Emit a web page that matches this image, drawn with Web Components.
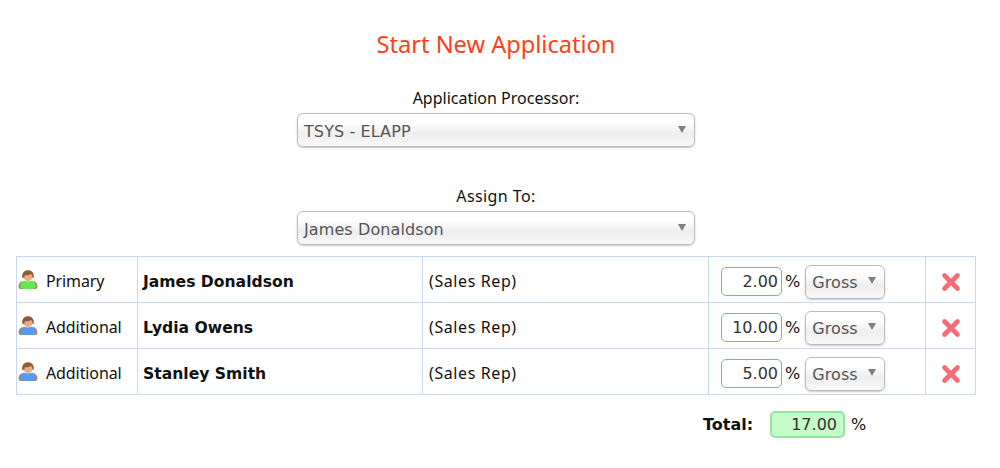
<!DOCTYPE html>
<html>
<head>
<meta charset="utf-8">
<title>Start New Application</title>
<style>
  html, body { margin: 0; background: #fff; }
  body { font-family: "Noto Sans", "DejaVu Sans", sans-serif; font-size: 16px; color: #111; }
</style>
</head>
<body>
<start-application></start-application>

<template id="person-icon-tpl">
  <style>
    :host { display: inline-block; width: 20px; height: 20px; flex: none; }
    svg { display: block; }
  </style>
  <svg width="20" height="20" viewBox="0 0 20 20">
    <path d="M.6 15.500c.3-2 1.600-3.700 3.400-4.500l1.300 8H2.500C1 19 .3 17 .6 15.500zM19.400 15.500c-.3-2-1.600-3.700-3.400-4.500l-1.300 8h2.800c1.500 0 2.200-2 1.900-3.500z" fill="#b08a55"/>
    <path id="shirt" d="M2.300 15.500c0-2.500 1.800-4.400 4-5 1.600 1.200 5.800 1.200 7.400 0 2.200.6 4 2.500 4 5 0 2-1.500 3.500-3.200 3.500H5.500c-1.700 0-3.200-1.500-3.200-3.500z"/>
    <path d="M5 5.500C5 2.500 7 .6 10 .6s5 1.900 5 4.900c0 2.800-2.300 5.500-5 5.500S5 8.300 5 5.500z" fill="#e8ad85"/>
    <path d="M4.300 8C3.500 3.200 6.300.2 10 .2s6.500 3 5.700 7.800l-1.300-.6c.1-1.500-.4-2.700-1.500-3.400-1.500 1.300-4.200 1.500-6 1.200-.4.800-.4 1.500-.4 2.200z" fill="#8f5a38"/>
  </svg>
</template>

<template id="drop-select-tpl">
  <style>
    :host { display: block; box-sizing: border-box; height: 34px; }
    .box {
      box-sizing: border-box; height: 100%;
      display: flex; align-items: center; justify-content: space-between;
      border: 1px solid #bdbdbd; border-radius: 6px;
      background: linear-gradient(#fff 0%, #fff 25%, #eeeeee 60%, #f8f8f8 100%);
      box-shadow: 0 1px 2px rgba(0,0,0,.22);
      padding: 0 8px 0 6px;
      font-family: "DejaVu Sans", sans-serif; font-size: 16px; letter-spacing: .1px; color: #555;
    }
    .box span { padding-top: 2px; }
    .arrow { width: 0; height: 0; border-left: 4px solid transparent; border-right: 4px solid transparent; border-top: 7px solid #808080; margin-top: -2px; }
  </style>
  <div class="box"><span><slot></slot></span><i class="arrow"></i></div>
</template>

<template id="num-box-tpl">
  <style>
    :host { display: block; box-sizing: border-box; width: 61px; height: 29px; }
    .box {
      box-sizing: border-box; height: 100%;
      display: flex; align-items: center; justify-content: flex-end;
      border: 1px solid #78aedb; border-radius: 5px; padding-right: 3px;
      font-family: "DejaVu Sans", sans-serif; font-size: 16px; color: #333; background: #fff;
    }
    :host([ok]) { width: 75px; height: 27px; }
    :host([ok]) .box { border: 2px solid #93e69b; background: #c6fcca; padding-right: 6px; }
  </style>
  <div class="box"><slot></slot></div>
</template>

<template id="assign-row-tpl">
  <style>
    :host {
      display: grid; grid-template-columns: 121px 285px 286px 217px 50px;
      box-sizing: border-box; height: 46px; font-size: 16px; color: #111;
      border-bottom: 1px solid #c8daef;
    }
    .cell { display: flex; align-items: center; box-sizing: border-box; border-right: 1px solid #c8daef; padding: 4px 0 0 5px; min-width: 0; white-space: nowrap; }
    .cell:last-child { border-right: 0; justify-content: center; padding-left: 0; }
    .role { padding: 0 0 0 1px; gap: 8px; }
    .role span { letter-spacing: -.1px; padding-top: 2px; }
    .name { font-family: "DejaVu Sans", sans-serif; font-weight: 700; font-size: 15.600px; }
    .cell.rep { letter-spacing: .6px; padding: 2px 0 0 6px; }
    .pay { padding-left: 12px; }
    .pct { margin: 0 5px 0 3px; font-family: "DejaVu Sans", sans-serif; }
    drop-select { width: 80px; }
    svg { display: block; }
  </style>
  <div class="cell role"><person-icon></person-icon><span id="role"></span></div>
  <div class="cell name"><span id="name"></span></div>
  <div class="cell rep">(Sales Rep)</div>
  <div class="cell pay"><num-box id="val"></num-box><span class="pct">%</span><drop-select>Gross</drop-select></div>
  <div class="cell">
    <svg width="20" height="20" viewBox="0 0 20 20"><path d="M3.500 3.500l13 13M16.500 3.500l-13 13" stroke="#f86a74" stroke-width="4.600" stroke-linecap="round"/></svg>
  </div>
</template>

<template id="start-application-tpl">
  <style>
    :host { display: block; box-sizing: border-box; width: 1000px; height: 468px; padding: 0 24px 0 16px; text-align: center; }
    h1 { margin: 0; padding-top: 27px; height: 85px; box-sizing: border-box; font-weight: 400; font-size: 23.600px; line-height: 34px; color: #ff4118; }
    label { display: block; height: 28px; line-height: 26px; font-size: 16px; }
    label.wide { letter-spacing: .4px; }
    .field { display: flex; flex-direction: column; align-items: center; margin-bottom: 36px; }
    .field.end { margin-bottom: 11px; }
    drop-select { width: 398px; text-align: left; }
    .table { border: 1px solid #c8daef; border-bottom: 0; width: 960px; box-sizing: border-box; text-align: left; }
    .total { display: flex; align-items: center; height: 27px; margin-top: 16px; padding-left: 687px; text-align: left; }
    .total b { width: 67px; font-family: "DejaVu Sans", sans-serif; font-size: 16px; }
    .total span { margin-left: 6px; font-family: "DejaVu Sans", sans-serif; }
  </style>
  <h1>Start New Application</h1>
  <div class="field"><label>Application Processor:</label><drop-select>TSYS - ELAPP</drop-select></div>
  <div class="field end"><label class="wide">Assign To:</label><drop-select>James Donaldson</drop-select></div>
  <div class="table">
    <assign-row role="Primary" name="James Donaldson" value="2.00" color="#62e84e"></assign-row>
    <assign-row role="Additional" name="Lydia Owens" value="10.00" color="#549cf2"></assign-row>
    <assign-row role="Additional" name="Stanley Smith" value="5.00" color="#549cf2"></assign-row>
  </div>
  <div class="total"><b>Total:</b><num-box ok>17.00</num-box><span>%</span></div>
</template>

<script>
function stamp(el, id) {
  el.attachShadow({ mode: "open" }).appendChild(document.getElementById(id).content.cloneNode(true));
}

class PersonIcon extends HTMLElement {
  constructor() { super(); stamp(this, "person-icon-tpl"); }
  set color(c) { this.shadowRoot.getElementById("shirt").setAttribute("fill", c); }
}
class DropSelect extends HTMLElement {
  constructor() { super(); stamp(this, "drop-select-tpl"); }
}
class NumBox extends HTMLElement {
  constructor() { super(); stamp(this, "num-box-tpl"); }
}
class AssignRow extends HTMLElement {
  constructor() { super(); stamp(this, "assign-row-tpl"); }
  connectedCallback() {
    const root = this.shadowRoot;
    root.getElementById("role").textContent = this.getAttribute("role");
    root.getElementById("name").textContent = this.getAttribute("name");
    root.getElementById("val").textContent = this.getAttribute("value");
    root.querySelector("person-icon").color = this.getAttribute("color");
  }
}
class StartApplication extends HTMLElement {
  constructor() { super(); stamp(this, "start-application-tpl"); }
}

customElements.define("person-icon", PersonIcon);
customElements.define("drop-select", DropSelect);
customElements.define("num-box", NumBox);
customElements.define("assign-row", AssignRow);
customElements.define("start-application", StartApplication);
</script>
</body>
</html>
